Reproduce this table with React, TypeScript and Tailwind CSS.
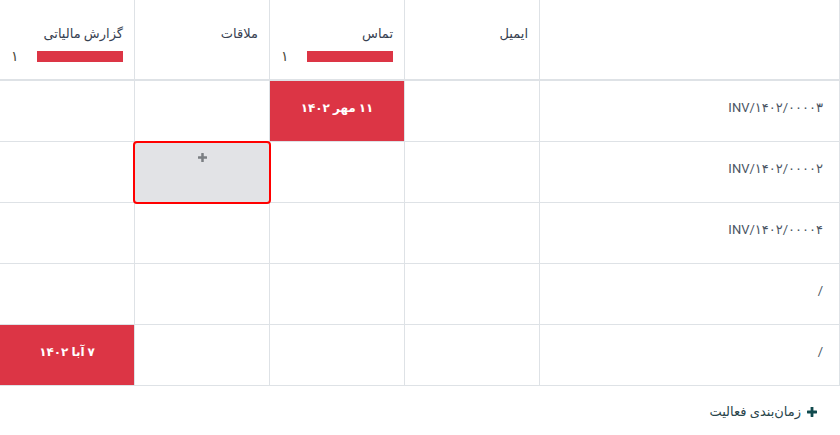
import React from 'react';

type Cell = { kind: 'empty' } | { kind: 'late'; label: string } | { kind: 'hover' };

const columns = [
  { title: 'ایمیل', count: 0 },
  { title: 'تماس', count: 1 },
  { title: 'ملاقات', count: 0 },
  { title: 'گزارش مالیاتی', count: 1 },
];

const rows: { name: string; cells: Cell[] }[] = [
  {
    name: 'INV/۱۴۰۲/۰۰۰۰۳',
    cells: [{ kind: 'empty' }, { kind: 'late', label: '۱۱ مهر ۱۴۰۲' }, { kind: 'empty' }, { kind: 'empty' }],
  },
  {
    name: 'INV/۱۴۰۲/۰۰۰۰۲',
    cells: [{ kind: 'empty' }, { kind: 'empty' }, { kind: 'hover' }, { kind: 'empty' }],
  },
  {
    name: 'INV/۱۴۰۲/۰۰۰۰۴',
    cells: [{ kind: 'empty' }, { kind: 'empty' }, { kind: 'empty' }, { kind: 'empty' }],
  },
  {
    name: '/',
    cells: [{ kind: 'empty' }, { kind: 'empty' }, { kind: 'empty' }, { kind: 'empty' }],
  },
  {
    name: '/',
    cells: [{ kind: 'empty' }, { kind: 'empty' }, { kind: 'empty' }, { kind: 'late', label: '۷ آبا ۱۴۰۲' }],
  },
];

function PlusIcon({ className }: { className?: string }) {
  return (
    <svg viewBox="0 0 10 10" className={className} fill="currentColor">
      <rect x="3.6" y="0" width="2.8" height="10" rx="0.4" />
      <rect x="0" y="3.6" width="10" height="2.8" rx="0.4" />
    </svg>
  );
}

function ActivityCell({ cell }: { cell: Cell }) {
  if (cell.kind === 'late') {
    return (
      <div className="w-[135px] h-[61px] border-r border-b border-[#dee2e6] bg-[#dc3545] flex items-start justify-center pt-[18px]">
        <span className="text-white font-bold text-[12px]">{cell.label}</span>
      </div>
    );
  }
  if (cell.kind === 'hover') {
    // خانه در حالت هاور با قاب قرمز
    return (
      <div className="relative w-[135px] h-[61px] border-r border-b border-[#dee2e6]">
        <div className="absolute top-[-1px] bottom-[-2px] left-[-2px] right-[-2px] bg-[#e2e3e6] border-2 border-[#ff0000] rounded-[4px] flex justify-center pt-[10px]">
          <PlusIcon className="w-[9px] h-[9px] text-[#7b7f83]" />
        </div>
      </div>
    );
  }
  return <div className="w-[135px] h-[61px] border-r border-b border-[#dee2e6]" />;
}

export default function App() {
  return (
    <div
      dir="rtl"
      className="w-[840px] h-[435px] bg-white text-[#374151] overflow-hidden"
      style={{ fontFamily: 'Roboto, "DejaVu Sans", sans-serif' }}
    >
      {/* جدول فعالیت‌ها */}
      <div className="flex flex-col">
        {/* سرستون‌ها */}
        <div className="flex border-b-2 border-[#dee2e6]">
          <div className="w-[300px] h-[79px] border-r border-[#dee2e6]" />
          {columns.map((col) => (
            <div
              key={col.title}
              className="w-[135px] h-[79px] border-r border-[#dee2e6] pt-[24px] pr-[11px] pl-[11px] flex flex-col"
            >
              <span className="text-[13px] leading-[20px]">{col.title}</span>
              {col.count > 0 && (
                <div className="flex items-center justify-between mt-[5px]">
                  <div className="w-[86px] h-[11px] bg-[#dc3545]" />
                  <span className="text-[14px] leading-[14px] text-[#4b4a3c]">۱</span>
                </div>
              )}
            </div>
          ))}
        </div>

        {/* ردیف‌ها */}
        {rows.map((row, i) => (
          <div key={i} className="flex">
            <div className="w-[300px] h-[61px] border-r border-b border-[#dee2e6] pr-[16px] pt-[14px]">
              <span dir="ltr" className="text-[13px] text-[#4b5563] inline-block">
                {row.name}
              </span>
            </div>
            {row.cells.map((cell, j) => (
              <ActivityCell key={j} cell={cell} />
            ))}
          </div>
        ))}
      </div>

      {/* دکمه زمان‌بندی */}
      <div className="flex items-center gap-[6px] pr-[23px] pt-[16px]">
        <PlusIcon className="w-[10px] h-[10px] text-[#114a4e]" />
        <span className="text-[13px] text-[#29444a]">زمان‌بندی فعالیت</span>
      </div>
    </div>
  );
}
